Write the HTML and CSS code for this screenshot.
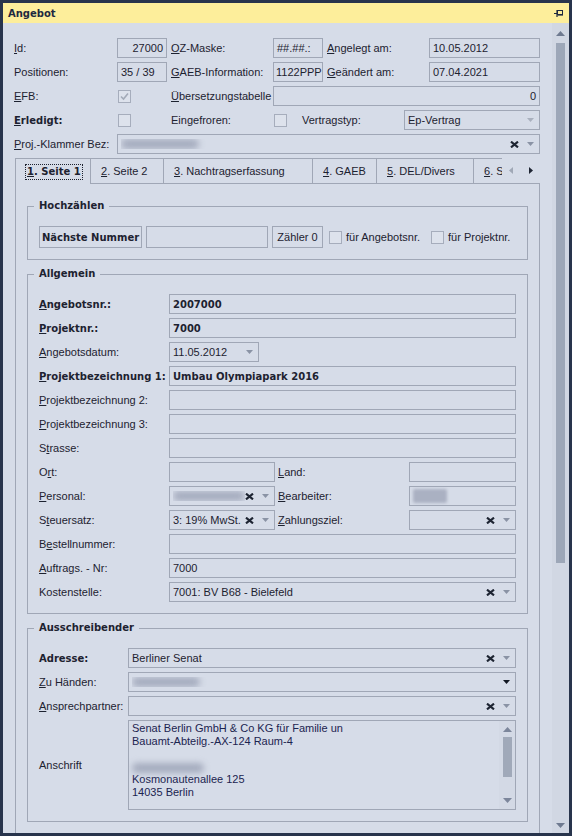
FILE: index.html
```html
<!DOCTYPE html>
<html lang="de">
<head>
<meta charset="utf-8">
<title>Angebot</title>
<link rel="stylesheet" href="styles.css">
</head>
<body>
<div class="window">
  <div class="titlebar">
    <span class="title">Angebot</span>
    <svg class="pin" width="9" height="8" viewBox="0 0 9 8"><path d="M0 4.5H3" stroke="#1e2940" stroke-width="1"/><path d="M3 1V8" stroke="#1e2940" stroke-width="1.2"/><rect x="3.5" y="1.5" width="5" height="4" fill="none" stroke="#1e2940" stroke-width="1"/><rect x="3.5" y="5" width="5.5" height="1.6" fill="#1e2940"/></svg>
  </div>
  <div class="main">
    <div class="content">
      <div class="row">
        <span class="lbl w103"><u>I</u>d:</span>
        <div class="box w50 right">27000</div>
        <span class="lbl w102 ml4"><u>O</u>Z-Maske:</span>
        <div class="box w50">##.##.:</div>
        <span class="lbl w102 ml4"><u>A</u>ngelegt am:</span>
        <div class="box w111">10.05.2012</div>
      </div>
      <div class="row">
        <span class="lbl w103">Positionen:</span>
        <div class="box w50">35 / 39</div>
        <span class="lbl w102 ml4"><u>G</u>AEB-Information:</span>
        <div class="box w50 tight">1122PPP</div>
        <span class="lbl w102 ml4"><u>G</u>eändert am:</span>
        <div class="box w111">07.04.2021</div>
      </div>
      <div class="row">
        <span class="lbl w103"><u>E</u>FB:</span>
        <div class="cell w54"><span class="chk checked"><svg width="11" height="11" viewBox="0 0 11 11"><path d="M2 5.5L4.5 8L9 2.5" fill="none" stroke="#a3aab8" stroke-width="1.6"/></svg></span></div>
        <span class="lbl w102"><u>Ü</u>bersetzungstabelle</span>
        <div class="box w267 right">0</div>
      </div>
      <div class="row">
        <span class="lbl w103 b"><u>E</u>rledigt:</span>
        <div class="cell w54"><span class="chk"></span></div>
        <span class="lbl w102">Eingefroren:</span>
        <div class="cell w29"><span class="chk"></span></div>
        <span class="lbl w102">Vertragstyp:</span>
        <div class="box combo w136"><span class="val">Ep-Vertrag</span><svg class="arrow" width="7" height="4" viewBox="0 0 7 4"><polygon points="0,0 7,0 3.5,4" fill="#a9b0be"/></svg></div>
      </div>
      <div class="row">
        <span class="lbl w103"><u>P</u>roj.-Klammer Bez:</span>
        <div class="box combo w423"><span class="val"><span class="blur bw78"></span></span><svg class="x" width="9" height="7" viewBox="0 0 9 7"><path d="M1 0.6L8 6.4M8 0.6L1 6.4" stroke="#1e2533" stroke-width="2.1"/></svg><svg class="arrow" width="7" height="4" viewBox="0 0 7 4"><polygon points="0,0 7,0 3.5,4" fill="#8a93a5"/></svg></div>
      </div>

      <div class="tabs">
        <div class="tabstrip">
          <div class="tab active t1"><span class="focus"><u>1</u>. Seite 1</span></div>
          <div class="tab t2"><span><u>2</u>. Seite 2</span></div>
          <div class="tab t3"><span><u>3</u>. Nachtragserfassung</span></div>
          <div class="tab t4"><span><u>4</u>. GAEB</span></div>
          <div class="tab t5"><span><u>5</u>. DEL/Divers</span></div>
          <div class="tab t6"><span><u>6</u>. S</span></div>
        </div>
        <div class="tabnav">
          <svg width="4" height="7" viewBox="0 0 4 7"><polygon points="4,0 4,7 0,3.5" fill="#a0a8b6"/></svg>
          <svg width="4" height="7" viewBox="0 0 4 7"><polygon points="0,0 0,7 4,3.5" fill="#1e2533"/></svg>
        </div>
      </div>

      <div class="panel">
        <fieldset class="group">
          <legend>Hochzählen</legend>
          <div class="row tall">
            <div class="btn b bw103">Nächste Nummer</div>
            <div class="box tallbox w122 ml4"></div>
            <div class="btn bw51 ml4">Zähler 0</div>
            <span class="chk ml6"></span>
            <span class="lbl ml4">für Angebotsnr.</span>
            <span class="chk ml11"></span>
            <span class="lbl ml4">für Projektnr.</span>
          </div>
        </fieldset>

        <fieldset class="group">
          <legend>Allgemein</legend>
          <div class="row">
            <span class="lbl w130 b"><u>A</u>ngebotsnr.:</span>
            <div class="box w347 b">2007000</div>
          </div>
          <div class="row">
            <span class="lbl w130 b"><u>P</u>rojektnr.:</span>
            <div class="box w347 b">7000</div>
          </div>
          <div class="row">
            <span class="lbl w130"><u>A</u>ngebotsdatum:</span>
            <div class="box combo w90"><span class="val">11.05.2012</span><svg class="arrow" width="7" height="4" viewBox="0 0 7 4"><polygon points="0,0 7,0 3.5,4" fill="#8a93a5"/></svg></div>
          </div>
          <div class="row">
            <span class="lbl w130 b"><u>P</u>rojektbezeichnung 1:</span>
            <div class="box w347 b">Umbau Olympiapark 2016</div>
          </div>
          <div class="row">
            <span class="lbl w130"><u>P</u>rojektbezeichnung 2:</span>
            <div class="box w347"></div>
          </div>
          <div class="row">
            <span class="lbl w130"><u>P</u>rojektbezeichnung 3:</span>
            <div class="box w347"></div>
          </div>
          <div class="row">
            <span class="lbl w130">S<u>t</u>rasse:</span>
            <div class="box w347"></div>
          </div>
          <div class="row">
            <span class="lbl w130">O<u>r</u>t:</span>
            <div class="box w106"></div>
            <span class="lbl w131 ml3"><u>L</u>and:</span>
            <div class="box w107"></div>
          </div>
          <div class="row">
            <span class="lbl w130"><u>P</u>ersonal:</span>
            <div class="box combo w106"><span class="val"><span class="blur bw72"></span></span><svg class="x" width="9" height="7" viewBox="0 0 9 7"><path d="M1 0.6L8 6.4M8 0.6L1 6.4" stroke="#1e2533" stroke-width="2.1"/></svg><svg class="arrow" width="7" height="4" viewBox="0 0 7 4"><polygon points="0,0 7,0 3.5,4" fill="#8a93a5"/></svg></div>
            <span class="lbl w131 ml3"><u>B</u>earbeiter:</span>
            <div class="box w107"><span class="blur block bw34"></span></div>
          </div>
          <div class="row">
            <span class="lbl w130">S<u>t</u>euersatz:</span>
            <div class="box combo w106"><span class="val">3: 19% MwSt.</span><svg class="x" width="9" height="7" viewBox="0 0 9 7"><path d="M1 0.6L8 6.4M8 0.6L1 6.4" stroke="#1e2533" stroke-width="2.1"/></svg><svg class="arrow" width="7" height="4" viewBox="0 0 7 4"><polygon points="0,0 7,0 3.5,4" fill="#8a93a5"/></svg></div>
            <span class="lbl w131 ml3"><u>Z</u>ahlungsziel:</span>
            <div class="box combo w107"><span class="val"></span><svg class="x" width="9" height="7" viewBox="0 0 9 7"><path d="M1 0.6L8 6.4M8 0.6L1 6.4" stroke="#1e2533" stroke-width="2.1"/></svg><svg class="arrow" width="7" height="4" viewBox="0 0 7 4"><polygon points="0,0 7,0 3.5,4" fill="#8a93a5"/></svg></div>
          </div>
          <div class="row">
            <span class="lbl w130">B<u>e</u>stellnummer:</span>
            <div class="box w347"></div>
          </div>
          <div class="row">
            <span class="lbl w130"><u>A</u>uftrags. - Nr:</span>
            <div class="box w347">7000</div>
          </div>
          <div class="row">
            <span class="lbl w130">Kostenstelle:</span>
            <div class="box combo w347"><span class="val">7001: BV B68 - Bielefeld</span><svg class="x" width="9" height="7" viewBox="0 0 9 7"><path d="M1 0.6L8 6.4M8 0.6L1 6.4" stroke="#1e2533" stroke-width="2.1"/></svg><svg class="arrow" width="7" height="4" viewBox="0 0 7 4"><polygon points="0,0 7,0 3.5,4" fill="#8a93a5"/></svg></div>
          </div>
        </fieldset>

        <fieldset class="group">
          <legend>Ausschreibender</legend>
          <div class="row">
            <span class="lbl w89 b">Adresse:</span>
            <div class="box combo w388"><span class="val">Berliner Senat</span><svg class="x" width="9" height="7" viewBox="0 0 9 7"><path d="M1 0.6L8 6.4M8 0.6L1 6.4" stroke="#1e2533" stroke-width="2.1"/></svg><svg class="arrow" width="7" height="4" viewBox="0 0 7 4"><polygon points="0,0 7,0 3.5,4" fill="#8a93a5"/></svg></div>
          </div>
          <div class="row">
            <span class="lbl w89"><u>Z</u>u Händen:</span>
            <div class="box combo w388"><span class="val"><span class="blur bw68"></span></span><svg class="arrow" width="7" height="4" viewBox="0 0 7 4"><polygon points="0,0 7,0 3.5,4" fill="#111722"/></svg></div>
          </div>
          <div class="row">
            <span class="lbl w89"><u>A</u>nsprechpartner:</span>
            <div class="box combo w388"><span class="val"></span><svg class="x" width="9" height="7" viewBox="0 0 9 7"><path d="M1 0.6L8 6.4M8 0.6L1 6.4" stroke="#1e2533" stroke-width="2.1"/></svg><svg class="arrow" width="7" height="4" viewBox="0 0 7 4"><polygon points="0,0 7,0 3.5,4" fill="#8a93a5"/></svg></div>
          </div>
          <div class="row memo-row">
            <span class="lbl w89">Anschrift</span>
            <div class="memo w388">
              <div class="memo-text">
                <div>Senat Berlin GmbH &amp; Co KG für Familie un</div>
                <div>Bauamt-Abteilg.-AX-124 Raum-4</div>
                <div>&nbsp;</div>
                <div><span class="blur bw72"></span></div>
                <div>Kosmonautenallee 125</div>
                <div>14035 Berlin</div>
              </div>
              <div class="memo-scroll">
                <svg width="9" height="5" viewBox="0 0 9 5"><polygon points="0,5 9,5 4.5,0" fill="#7c869b"/></svg>
                <div class="mthumb"></div>
                <div class="spacer"></div>
                <svg width="9" height="5" viewBox="0 0 9 5"><polygon points="0,0 9,0 4.5,5" fill="#7c869b"/></svg>
              </div>
            </div>
          </div>
        </fieldset>
      </div>
    </div>
    <div class="vscroll">
      <svg width="9" height="5" viewBox="0 0 9 5"><polygon points="0,5 9,5 4.5,0" fill="#6f7a90"/></svg>
      <div class="thumb"></div>
      <div class="spacer"></div>
      <svg width="9" height="5" viewBox="0 0 9 5"><polygon points="0,0 9,0 4.5,5" fill="#6f7a90"/></svg>
    </div>
  </div>
</div>
</body>
</html>
```

FILE: styles.css
```css
* { box-sizing: border-box; }

body {
  margin: 0;
  background: #28344c;
  font-family: "Liberation Sans", Arial, sans-serif;
  font-size: 11px;
  color: #1d2230;
}

u { text-decoration: underline; text-underline-offset: 1px; }

.window {
  width: 566px;
  height: 830px;
  margin: 3px;
  background: #d6dce8;
  display: flex;
  flex-direction: column;
  overflow: hidden;
}

.titlebar {
  height: 20px;
  flex: none;
  background: #fdee9b;
  display: flex;
  align-items: center;
  justify-content: space-between;
  padding: 0 6px 0 5px;
}

.title, .b, legend, .tab.active {
  font-family: "DejaVu Sans", sans-serif;
  font-weight: bold;
  font-size: 10px;
}

.title { color: #1e2940; }

.main {
  flex: 1;
  min-height: 0;
  display: flex;
}

.content {
  width: 549px;
  flex: none;
  padding: 15px 0 0 11px;
}

/* main scrollbar */
.vscroll {
  width: 17px;
  flex: none;
  background: #d1d7e3;
  display: flex;
  flex-direction: column;
  align-items: center;
  padding: 8px 0 5px;
}
.thumb {
  width: 9px;
  height: 520px;
  margin-top: 7px;
  background: #9da7b8;
}
.spacer { flex: 1; }

/* rows */
.row {
  display: flex;
  align-items: center;
  height: 20px;
  margin-bottom: 4px;
}
.row:last-child { margin-bottom: 0; }
.row.tall { height: 22px; }

.lbl { flex: none; white-space: nowrap; }

.box {
  flex: none;
  height: 20px;
  border: 1px solid #a0a7b6;
  padding: 0 3px;
  display: flex;
  align-items: center;
  white-space: nowrap;
  overflow: hidden;
}
.box.right { justify-content: flex-end; }
.box.tight { padding: 0 2px; }
.tallbox { height: 22px; }

.combo { padding-right: 5px; }
.combo .val { flex: 1; overflow: hidden; display: flex; align-items: center; }
.combo .x { flex: none; margin-right: 8px; }
.combo .arrow { flex: none; }

.cell { flex: none; display: flex; align-items: center; padding-left: 1px; }

.chk {
  flex: none;
  width: 13px;
  height: 13px;
  border: 1px solid #a6adbc;
  background: #dde2ec;
  display: flex;
  align-items: center;
  justify-content: center;
}

.btn {
  flex: none;
  height: 22px;
  border: 1px solid #a0a7b6;
  display: flex;
  align-items: center;
  justify-content: center;
  white-space: nowrap;
}

.blur {
  display: block;
  height: 10px;
  border-radius: 5px;
  background: #a5acbe;
  filter: blur(3px);
}
.blur.block {
  height: 14px;
  border-radius: 2px;
  filter: blur(1.5px);
  background: #aab1c2;
}

/* widths */
.w29 { width: 29px; }
.w50 { width: 50px; }
.w54 { width: 54px; }
.w89 { width: 89px; }
.w90 { width: 90px; }
.w102 { width: 102px; }
.w103 { width: 103px; }
.w106 { width: 106px; }
.w107 { width: 107px; }
.w111 { width: 111px; }
.w122 { width: 122px; }
.w130 { width: 130px; }
.w131 { width: 131px; }
.w136 { width: 136px; }
.w267 { width: 267px; }
.w347 { width: 347px; }
.w388 { width: 388px; }
.w423 { width: 423px; }
.bw34 { width: 34px; }
.bw51 { width: 51px; }
.bw68 { width: 68px; }
.bw72 { width: 72px; }
.bw78 { width: 78px; }
.bw103 { width: 103px; }
.ml3 { margin-left: 3px; }
.ml4 { margin-left: 4px; }
.ml6 { margin-left: 6px; }
.ml11 { margin-left: 11px; }

/* tabs */
.tabs {
  display: flex;
  width: 525px;
  height: 26px;
  margin-left: 1px;
}
.tabstrip {
  display: flex;
  width: 487px;
  overflow: hidden;
}
.tab {
  flex: none;
  height: 26px;
  border-top: 1px solid #a0a7b6;
  border-right: 1px solid #a0a7b6;
  border-bottom: 1px solid #a0a7b6;
  display: flex;
  align-items: center;
  padding-left: 10px;
  white-space: nowrap;
}
.tab.active {
  border-left: 1px solid #a0a7b6;
  border-bottom: none;
}
.focus {
  outline: 1px dotted #1d2230;
  outline-offset: 0;
  padding: 1px 1px 2px;
}
.t1 { width: 76px; }
.t2 { width: 73px; }
.t3 { width: 149px; }
.t4 { width: 64px; }
.t5 { width: 97px; }
.t6 { width: 40px; border-right: none; }

.tabnav {
  flex: 1;
  border-bottom: 1px solid #a0a7b6;
  display: flex;
  align-items: center;
  gap: 16px;
  padding-left: 7px;
}

.panel {
  width: 525px;
  margin-left: 1px;
  border-left: 1px solid #a0a7b6;
  border-right: 1px solid #a0a7b6;
  padding: 15px 11px 20px;
}

/* group boxes */
.group {
  margin: 7px 0 0;
  border: 1px solid #a0a7b6;
  padding: 13px 11px 11px;
  min-width: 0;
}
.group:first-child { margin-top: 0; }
legend {
  padding: 0 5px;
  margin-left: -5px;
  line-height: 14px;
  color: #1d2230;
}

/* memo */
.memo-row { height: 90px; }
.memo {
  flex: none;
  height: 90px;
  border: 1px solid #a0a7b6;
  display: flex;
}
.memo-text {
  flex: 1;
  padding: 1px 3px;
  line-height: 13px;
  color: #1c2450;
  white-space: nowrap;
  overflow: hidden;
}
.memo-text .blur { margin-top: 2px; }
.memo-scroll {
  width: 16px;
  flex: none;
  background: #d3d9e5;
  display: flex;
  flex-direction: column;
  align-items: center;
  padding: 6px 0 6px;
}
.mthumb {
  width: 9px;
  height: 40px;
  margin-top: 5px;
  background: #a0a9b9;
}
```
